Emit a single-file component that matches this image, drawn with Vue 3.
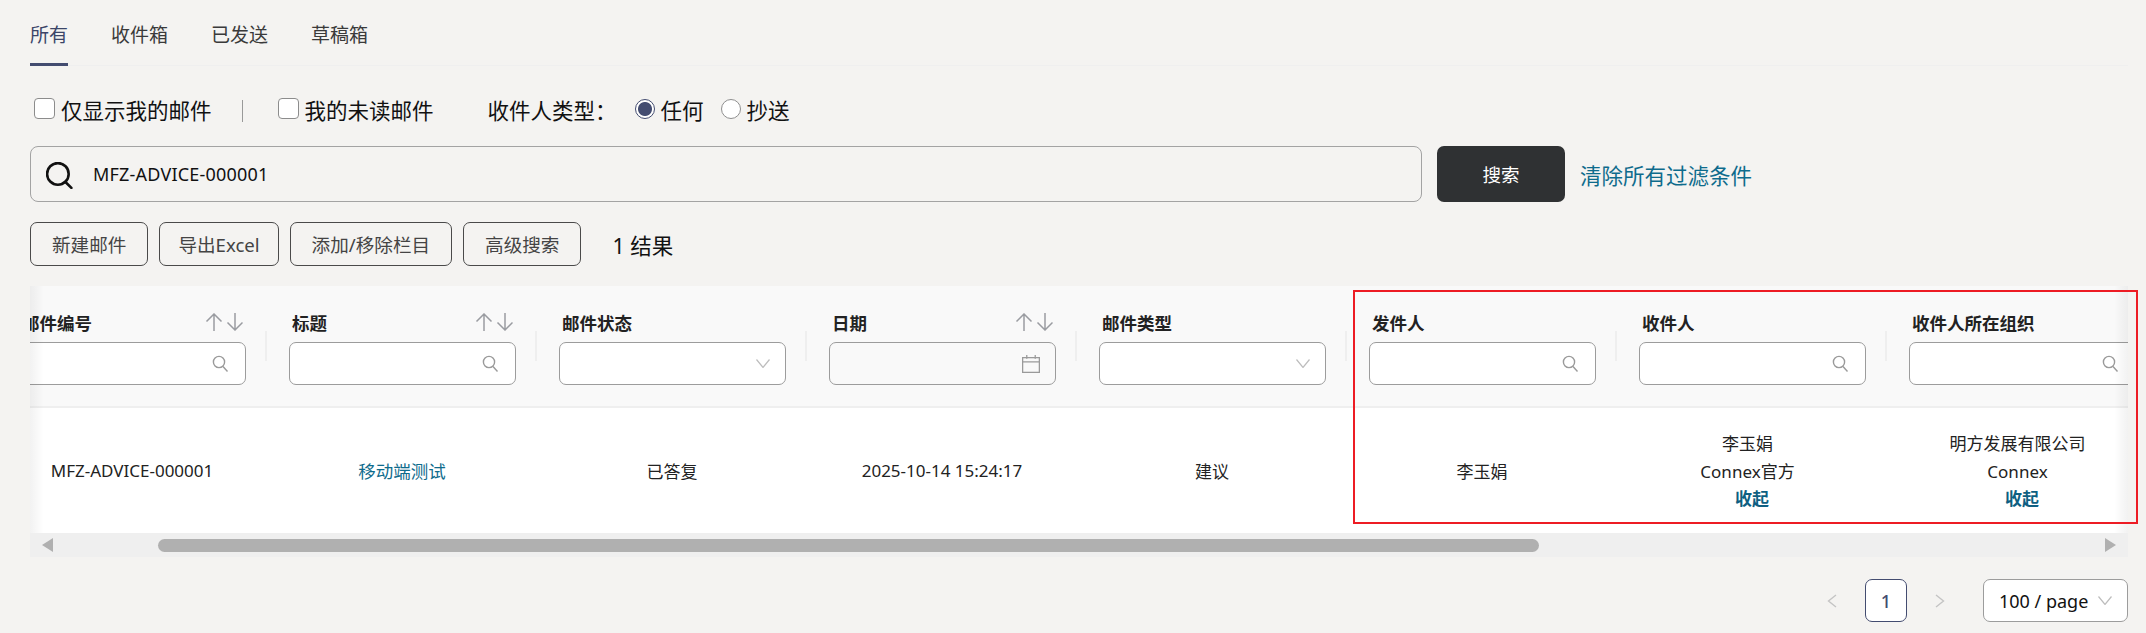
<script setup>
const tabs = ['所有', '收件箱', '已发送', '草稿箱']
const buttons = ['新建邮件', '导出Excel', '添加/移除栏目', '高级搜索']
const columns = [
  { label: '邮件编号', icon: 'search', sort: true },
  { label: '标题', icon: 'search', sort: true },
  { label: '邮件状态', icon: 'chevron' },
  { label: '日期', icon: 'calendar', sort: true, tinted: true },
  { label: '邮件类型', icon: 'chevron' },
  { label: '发件人', icon: 'search' },
  { label: '收件人', icon: 'search' },
  { label: '收件人所在组织', icon: 'search' }
]
</script>

<template>
  <div class="page">
    <nav class="tabs">
      <a v-for="(t, i) in tabs" :key="t" class="tab" :class="{ active: i === 0 }">{{ t }}</a>
    </nav>

    <div class="filters">
      <label class="opt"><input type="checkbox" class="check" />仅显示我的邮件</label>
      <span class="divider"></span>
      <label class="opt"><input type="checkbox" class="check" />我的未读邮件</label>
      <span class="type-label">收件人类型：</span>
      <label class="opt radio-opt"><input type="radio" name="t" class="radio" checked />任何</label>
      <label class="opt radio-opt"><input type="radio" name="t" class="radio" />抄送</label>
    </div>

    <div class="search-row">
      <div class="search-box">
        <svg class="search-icon" viewBox="2 1 25 25" fill="none" stroke="#111" stroke-width="2.4">
          <circle cx="13" cy="12" r="10" />
          <path d="M20 19.500l5.500 5.500" stroke-linecap="round" />
        </svg>
        <span class="search-text">MFZ-ADVICE-000001</span>
      </div>
      <button class="search-btn">搜索</button>
      <a class="clear">清除所有过滤条件</a>
    </div>

    <div class="actions">
      <button v-for="b in buttons" :key="b" class="action">{{ b }}</button>
      <span class="count">1 结果</span>
    </div>

    <section class="table">
      <div class="viewport">
        <div class="track">
          <div class="head">
            <div v-for="c in columns" :key="c.label" class="hcell">
              <div class="hlabel">
                <span>{{ c.label }}</span>
                <svg v-if="c.sort" class="sort" viewBox="0 0 38 18" fill="none" stroke="#9a9ca1" stroke-width="1.5">
                  <path d="M9 18V1M1.500 8.500L9 1l7.500 7.500" />
                  <path d="M30 0v17M22.500 9.500L30 17l7.500-7.500" />
                </svg>
              </div>
              <div class="field" :class="{ tinted: c.tinted }">
                <svg v-if="c.icon === 'search'" class="fi-search" viewBox="0 0 16 17" fill="none" stroke="#9a9a9a" stroke-width="1.4">
                  <circle cx="7" cy="7" r="5.600" />
                  <path d="M11 11.500l4.500 5" />
                </svg>
                <svg v-else-if="c.icon === 'chevron'" class="fi-chevron" viewBox="0 0 14 9" fill="none" stroke="#bdbdbd" stroke-width="1.2">
                  <path d="M.5.5L7 8.500 13.500.5" />
                </svg>
                <svg v-else class="fi-cal" viewBox="0 0 17 17" fill="none" stroke="#9a9a9a" stroke-width="1.200">
                  <rect x=".6" y="2.500" width="15.800" height="13.900" />
                  <path d="M.6 6.500h15.800M4.500 0v3.500M12.500 0v3.500" />
                </svg>
              </div>
            </div>
          </div>
          <div class="row">
            <div class="cell">MFZ-ADVICE-000001</div>
            <div class="cell"><a class="link">移动端测试</a></div>
            <div class="cell">已答复</div>
            <div class="cell">2025-10-14 15:24:17</div>
            <div class="cell">建议</div>
            <div class="cell">李玉娟</div>
            <div class="cell stack">
              <div class="names"><span>李玉娟</span><span>Connex官方</span></div>
              <a class="fold">收起</a>
            </div>
            <div class="cell stack">
              <div class="names"><span>明方发展有限公司</span><span>Connex</span></div>
              <a class="fold">收起</a>
            </div>
          </div>
        </div>
        <div class="shade-left"></div>
        <div class="shade-right"></div>
      </div>
      <div class="scrollbar">
        <span class="arrow left"></span>
        <div class="rail"><div class="thumb"></div></div>
        <span class="arrow right"></span>
      </div>
    </section>

    <div class="pager">
      <svg class="pg-arrow" viewBox="0 0 10 14" fill="none" stroke="#c4c4c4" stroke-width="1.400"><path d="M9 1L1.500 7 9 13" /></svg>
      <span class="pg-num">1</span>
      <svg class="pg-arrow" viewBox="0 0 10 14" fill="none" stroke="#c4c4c4" stroke-width="1.400"><path d="M1 1l7.500 6L1 13" /></svg>
      <div class="pg-size">
        <span>100 / page</span>
        <svg class="fi-chevron" viewBox="0 0 14 9" fill="none" stroke="#bdbdbd" stroke-width="1.200"><path d="M.5.5L7 8.500 13.500.5" /></svg>
      </div>
    </div>

    <div class="marker"></div>
  </div>
</template>

<style>
html, body { margin: 0; background: #f4f3f1; }
</style>

<style scoped>
.page {
  position: relative;
  box-sizing: border-box;
  width: 2146px;
  height: 633px;
  padding: 0 18px 0 30px;
  overflow: hidden;
  background: #f4f3f1;
  color: #1c1c1c;
  font-family: "Noto Sans", "Noto Sans CJK SC", sans-serif;
}
.tabs {
  display: flex;
  gap: 43px;
  height: 66px;
  border-bottom: 1px solid #efefef;
  box-sizing: border-box;
}
.tab {
  position: relative;
  font-size: 19px;
  line-height: 24px;
  padding-top: 23px;
  color: #3a3a3a;
}
.tab.active { color: #3b4568; }
.tab.active::after {
  content: "";
  position: absolute;
  left: 0;
  right: 0;
  bottom: -1px;
  height: 3px;
  background: #434c70;
}
.filters {
  display: flex;
  align-items: center;
  height: 40px;
  margin-top: 24px;
  font-size: 21.500px;
  color: #111;
  padding: 0 0 2px 4px;
  box-sizing: border-box;
}
.opt { display: flex; align-items: center; }
.check {
  appearance: none;
  box-sizing: border-box;
  width: 21px;
  height: 21px;
  margin: 0 6px 2px 0;
  border: 1px solid #8c8c8c;
  border-radius: 4px;
  background: #fff;
}
.divider {
  width: 1px;
  height: 22px;
  margin: 4px 35px 0 30px;
  background: #999;
}
.type-label { margin-left: 54px; margin-right: 18px; }
.radio-opt { margin-right: 17px; }
.radio {
  appearance: none;
  box-sizing: border-box;
  width: 20px;
  height: 20px;
  margin: 0 6px 1px 0;
  border: 1.5px solid #8f8f8f;
  border-radius: 50%;
  background: #fff;
}
.radio:checked {
  border-color: #434c70;
  background: radial-gradient(circle, #434c70 0 6.500px, #fff 7.500px);
}
.search-row {
  display: flex;
  align-items: stretch;
  margin-top: 16px;
  height: 56px;
}
.search-box {
  display: flex;
  align-items: center;
  box-sizing: border-box;
  width: 1392px;
  padding-left: 15px;
  border: 1px solid #a3a3a3;
  border-radius: 8px;
}
.search-icon { width: 27px; height: 27px; margin-top: 2px; }
.search-text { margin-left: 20px; font-size: 18px; letter-spacing: .2px; color: #111; }
.search-btn {
  width: 128px;
  margin-left: 15px;
  border: 0;
  border-radius: 7px;
  background: #2f3133;
  color: #fff;
  font: inherit;
  font-size: 18.500px;
}
.clear {
  align-self: center;
  margin-left: 15px;
  margin-top: 1px;
  font-size: 21.500px;
  color: #0e6b8c;
}
.actions {
  display: flex;
  align-items: center;
  gap: 11px;
  margin-top: 20px;
  height: 44px;
}
.action {
  box-sizing: border-box;
  height: 44px;
  padding: 0 21px 2px;
  border: 1px solid #4a4a4a;
  border-radius: 7px;
  background: transparent;
  color: #444;
  font: inherit;
  font-size: 18.600px;
}
.action:nth-child(2) { padding: 0 18px 2px; }
.count { margin-left: 20px; font-size: 21.500px; color: #111; }
.table { margin-top: 20px; width: 2098px; }
.viewport { position: relative; overflow: hidden; }
.track { margin-left: -33px; width: 2160px; }
.head {
  display: flex;
  height: 122px;
  box-sizing: border-box;
  background: #f9f9f9;
  border-bottom: 2px solid #efefef;
}
.hcell {
  position: relative;
  box-sizing: border-box;
  flex: 0 0 270px;
  padding: 24px 21px 0 22px;
}
.hcell::after {
  content: "";
  position: absolute;
  right: 0;
  top: 45px;
  width: 2px;
  height: 30px;
  background: #efefef;
}
.hlabel {
  display: flex;
  align-items: center;
  justify-content: space-between;
  height: 24px;
  margin-bottom: 8px;
  padding: 0 3px 0 3px;
  font-size: 17.500px;
  font-weight: 700;
  color: #222;
}
.sort { width: 38px; height: 18px; }
.field {
  display: flex;
  align-items: center;
  justify-content: flex-end;
  box-sizing: border-box;
  height: 43px;
  padding-right: 15px;
  border: 1px solid #9c9c9c;
  border-radius: 7px;
  background: #fff;
}
.field.tinted { background: #f9f9f9; }
.fi-search { width: 16px; height: 17px; margin-right: 2px; }
.fi-chevron { width: 14px; height: 9px; }
.fi-cal { width: 18px; height: 18px; }
.row { display: flex; height: 125px; background: #fff; }
.cell {
  display: flex;
  align-items: center;
  justify-content: center;
  flex: 0 0 270px;
  font-size: 17px;
  color: #222;
}
.link { color: #0e6b8c; font-size: 17.500px; }
.stack { flex-direction: column; }
.names {
  display: flex;
  flex-direction: column;
  align-items: center;
  padding-right: 9px;
  line-height: 28px;
}
.fold { font-size: 17px; font-weight: 700; line-height: 26px; color: #0e5f82; }
.shade-left, .shade-right { position: absolute; top: 0; bottom: 0; width: 14px; pointer-events: none; }
.shade-left { left: 0; background: linear-gradient(90deg, rgba(0,0,0,.05), transparent); }
.shade-right { right: 0; background: linear-gradient(270deg, rgba(0,0,0,.05), transparent); }
.scrollbar {
  display: flex;
  align-items: center;
  height: 24px;
  background: #efefef;
}
.arrow { width: 0; height: 0; border-top: 7px solid transparent; border-bottom: 7px solid transparent; }
.arrow.left { margin-left: 12px; border-right: 11px solid #b0b0b0; }
.arrow.right { margin-right: 12px; border-left: 11px solid #b0b0b0; }
.rail { flex: 1; padding: 0 566px 0 105px; }
.thumb { height: 13px; border-radius: 7px; background: #b0b0b0; }
.pager {
  display: flex;
  align-items: center;
  justify-content: flex-end;
  margin-top: 22px;
  height: 43px;
}
.pg-arrow { width: 10px; height: 14px; }
.pg-num {
  display: flex;
  align-items: center;
  justify-content: center;
  box-sizing: border-box;
  width: 42px;
  height: 43px;
  margin: 0 28px;
  border: 1px solid #434c70;
  border-radius: 7px;
  background: #fff;
  font-size: 18px;
  font-weight: 500;
  color: #434c70;
}
.pg-size {
  display: flex;
  align-items: center;
  box-sizing: border-box;
  width: 145px;
  height: 43px;
  margin-left: 38px;
  padding-left: 15px;
  gap: 10px;
  border: 1px solid #9c9c9c;
  border-radius: 7px;
  background: #fff;
  font-size: 18px;
  color: #111;
}
.marker {
  position: absolute;
  left: 1353px;
  top: 290px;
  width: 785px;
  height: 234px;
  box-sizing: border-box;
  border: 2px solid #ed1c24;
  pointer-events: none;
}
</style>
